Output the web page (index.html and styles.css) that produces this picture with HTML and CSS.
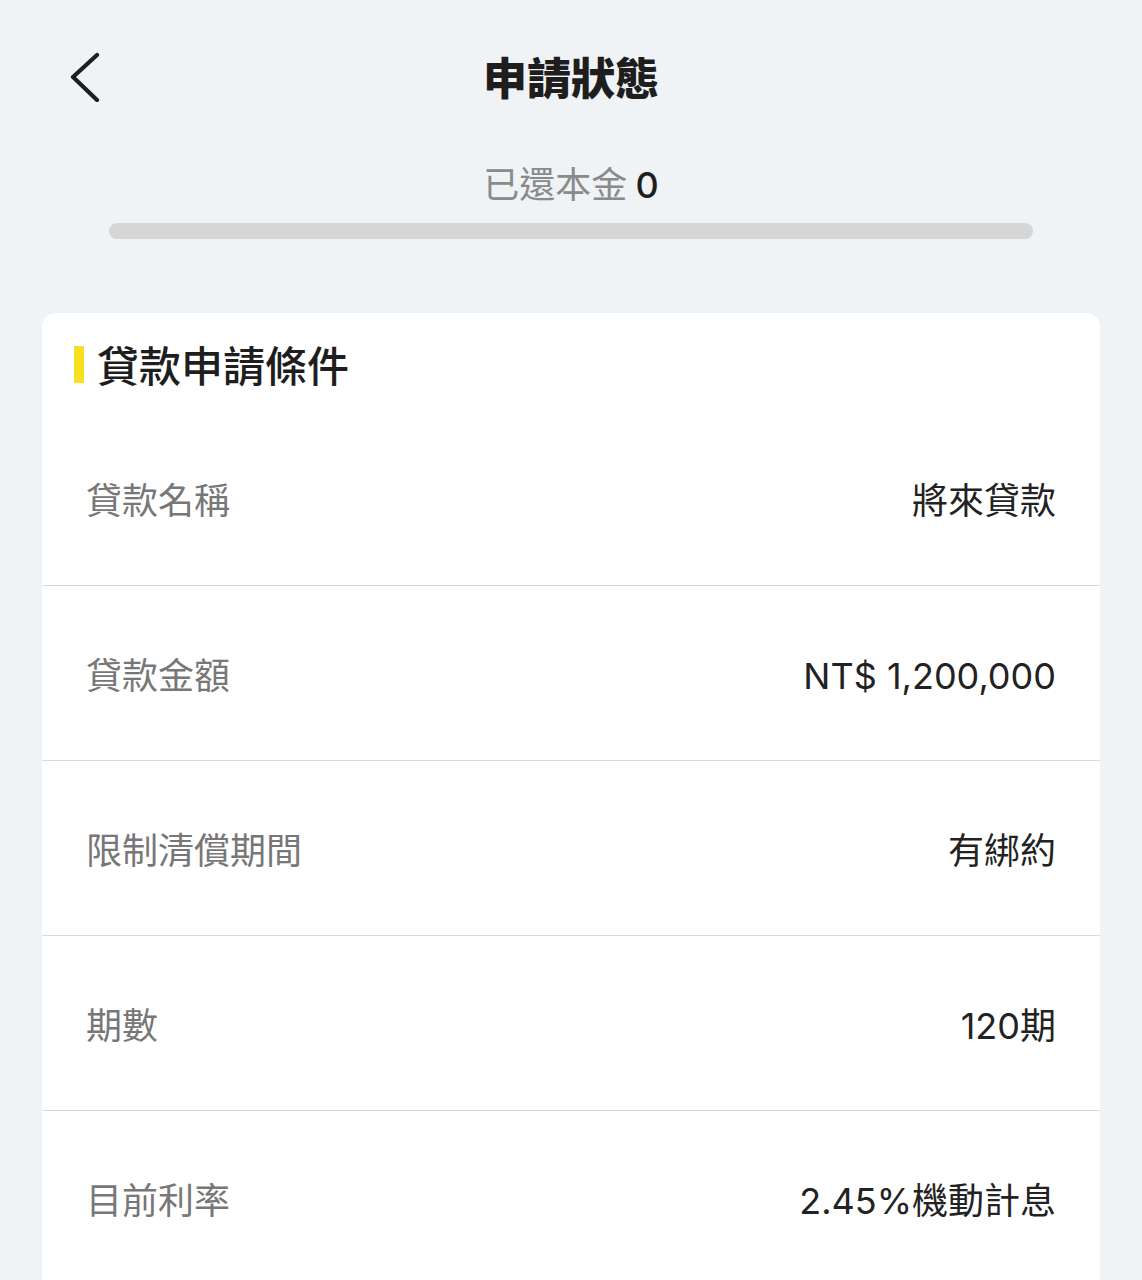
FILE: index.html
```html
<!DOCTYPE html>
<html lang="zh-Hant">
<head>
<meta charset="utf-8">
<title>申請狀態</title>
<link rel="stylesheet" href="styles.css">
</head>
<body>
<div class="page">
  <header class="header">
    <div class="back">
      <svg width="34" height="50" viewBox="0 0 34 50" fill="none" stroke="#1e1e1e" stroke-width="4.2" stroke-linecap="round" stroke-linejoin="round"><path d="M29 3 L5 25 L29 48"/></svg>
    </div>
    <h1 class="title">申請狀態</h1>
    <div></div>
  </header>
  <div class="repaid"><span class="repaid-label">已還本金</span> <span class="repaid-value">0</span></div>
  <div class="bar"></div>
  <section class="card">
    <h2 class="card-title">貸款申請條件</h2>
    <div class="row"><span class="label">貸款名稱</span><span class="value">將來貸款</span></div>
    <div class="row"><span class="label">貸款金額</span><span class="value">NT$ 1,200,000</span></div>
    <div class="row"><span class="label">限制清償期間</span><span class="value">有綁約</span></div>
    <div class="row"><span class="label">期數</span><span class="value">120期</span></div>
    <div class="row"><span class="label">目前利率</span><span class="value">2.45%機動計息</span></div>
  </section>
</div>
</body>
</html>
```
FILE: styles.css
```css
html, body {
  margin: 0;
  padding: 0;
  background: #eff3f5;
}
body {
  font-family: "Noto Sans CJK TC", "Noto Sans", sans-serif;
  color: #1e1e1e;
  overflow: hidden;
}
.page {
  width: 1142px;
  height: 1280px;
  overflow: hidden;
}
.header {
  height: 152px;
  display: grid;
  grid-template-columns: 1fr auto 1fr;
  align-items: center;
}
.back {
  align-self: start;
  padding-left: 68px;
  padding-top: 52px;
  display: flex;
}
.title {
  margin: 0;
  font-size: 44px;
  font-weight: 900;
  line-height: 60px;
  letter-spacing: 0;
}
.repaid {
  margin-top: 5px;
  height: 50px;
  text-align: center;
  font-size: 36px;
  line-height: 50px;
}
.repaid-label {
  color: #8a8a8a;
  font-weight: 400;
}
.repaid-value {
  color: #1e1e1e;
  font-family: "Inter", "Noto Sans", sans-serif;
  font-weight: 500;
}
.bar {
  margin: 16px 109px 0 109px;
  height: 16px;
  border-radius: 8px;
  background: #d6d6d6;
}
.card {
  margin: 74px 42px 0 42px;
  background: #ffffff;
  border-radius: 14px 14px 0 0;
  padding-top: 26px;
}
.card-title {
  margin: 0 0 22px 0;
  padding-left: 32px;
  display: flex;
  align-items: center;
  gap: 13px;
  font-size: 42px;
  font-weight: 500;
  line-height: 50px;
  color: #1e1e1e;
}
.card-title::before {
  content: "";
  width: 10px;
  height: 37px;
  background: #f7e11e;
}
.row {
  box-sizing: border-box;
  height: 175px;
  padding: 0 44px 0 44px;
  border-bottom: 1px solid #d8d8d8;
  display: flex;
  justify-content: space-between;
  align-items: center;
  font-size: 36px;
  line-height: 50px;
}
.label {
  color: #777777;
}
.value {
  padding-top: 5px;
  color: #222222;
  font-family: "Inter", "Noto Sans CJK TC", sans-serif;
}
```
